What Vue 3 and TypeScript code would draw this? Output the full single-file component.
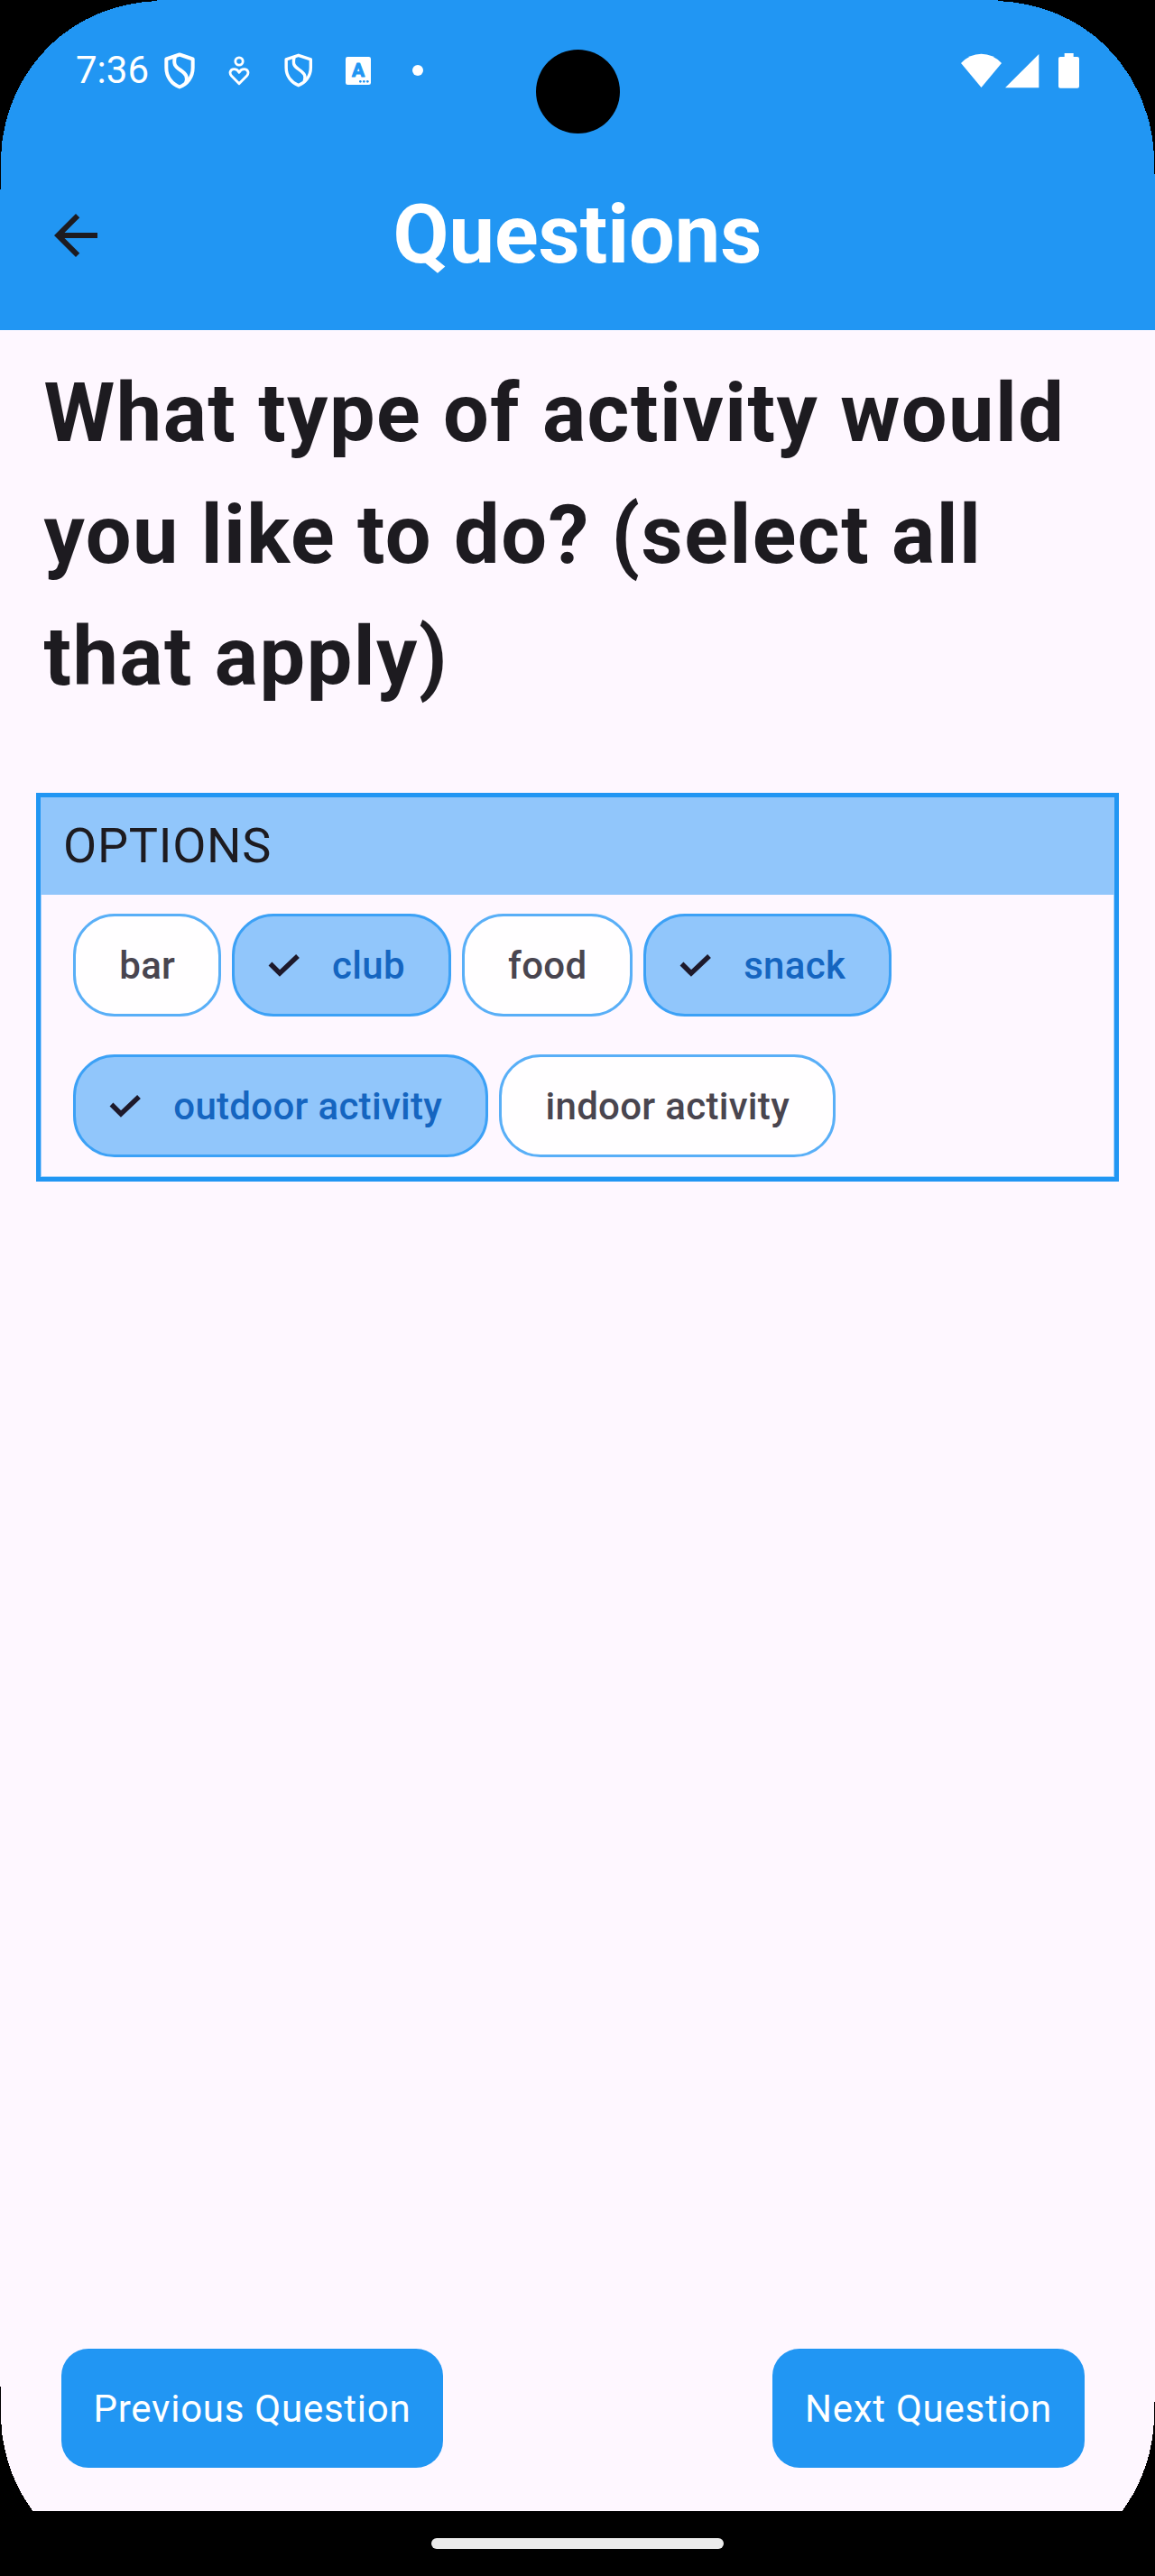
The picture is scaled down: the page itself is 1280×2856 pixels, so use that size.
<script setup lang="ts">
import { ref } from 'vue'

interface Option {
  label: string
  selected: boolean
}

const options = ref<Option[]>([
  { label: 'bar', selected: false },
  { label: 'club', selected: true },
  { label: 'food', selected: false },
  { label: 'snack', selected: true },
  { label: 'outdoor activity', selected: true },
  { label: 'indoor activity', selected: false },
])

function toggle(option: Option): void {
  option.selected = !option.selected
}

const cornerPath = 'M0 0H174V1C128 3 87 20 55.5 50C24 81 3 123 1 174V210H0Z'
const cornerPathShort = 'M0 0H174V1C128 3 87 20 55.5 50C24 81 3 123 1 174V193H0Z'
</script>

<template>
  <div class="screen">
    <header class="top">
      <div class="status">
        <span class="time">7:36</span>
        <svg class="shield" viewBox="66 53 102 122" width="34" height="41">
          <path d="M117 60L73 75V104C73 135 92 158 117 168C142 158 161 135 161 104V75Z" />
          <path d="M102 66C96 92 101 99 119 111C139 125 145 134 138 155" />
        </svg>
        <svg class="heart" viewBox="279 64 72 99" width="24" height="33">
          <circle cx="315" cy="82" r="12.5" />
          <path d="M315 156L290 131C280 120 287 108 298 108C306 108 312 113 315 119C318 113 324 108 332 108C343 108 350 120 340 131Z" />
        </svg>
        <svg class="shield small" viewBox="66 53 102 122" width="31.5" height="38">
          <path d="M117 60L73 75V104C73 135 92 158 117 168C142 158 161 135 161 104V75Z" />
          <path d="M102 66C96 92 101 99 119 111C139 125 145 134 138 155" />
        </svg>
        <svg class="letter" viewBox="669 68 84 93" width="28" height="31">
          <rect x="669" y="68" width="84" height="93" rx="7" fill="#fff" />
          <text x="711.5" y="135.5" text-anchor="middle">A</text>
          <circle cx="718" cy="150" r="4" />
          <circle cx="730" cy="150" r="4" />
          <circle cx="742" cy="150" r="4" />
        </svg>
        <span class="dot"></span>
        <svg class="system" viewBox="75 54 394 117" width="131.33" height="39">
          <path d="M142.500 168L75 87Q104 56 142.500 56Q181 56 210 87Z" />
          <path d="M222 169L334 57V169Z" />
          <path d="M419 54H449V66H462Q468 66 468 72V164Q468 170 462 170H405Q399 170 399 164V72Q399 66 405 66H419Z" />
        </svg>
      </div>
      <div class="appbar">
        <button class="back" aria-label="Back">
          <svg viewBox="4 4 16 16" width="48" height="48">
            <path d="M20 11H7.830l5.590-5.590L12 4l-8 8 8 8 1.410-1.410L7.830 13H20z" />
          </svg>
        </button>
        <h1>Questions</h1>
      </div>
    </header>

    <main>
      <h2>What type of activity would you like to do? (select all that apply)</h2>
      <section class="box">
        <div class="box-title">OPTIONS</div>
        <div class="chips">
          <button
            v-for="option in options"
            :key="option.label"
            class="chip"
            :class="{ selected: option.selected }"
            @click="toggle(option)"
          >
            <svg v-if="option.selected" class="check" viewBox="0 0 36 27" width="36" height="27">
              <path d="M2.500 11.500L13 22L33 3" />
            </svg>
            <span>{{ option.label }}</span>
          </button>
        </div>
      </section>
    </main>

    <footer>
      <button class="nav-button">Previous Question</button>
      <button class="nav-button">Next Question</button>
    </footer>
    <div class="gesture"><span></span></div>

    <span class="camera"></span>
    <svg class="corners" viewBox="0 0 1280 2856" width="1280" height="2856" shape-rendering="crispEdges">
      <path :d="cornerPath" />
      <path :d="cornerPathShort" transform="translate(1280 0) scale(-1 1)" />
      <path :d="cornerPath" transform="translate(0 2856) scale(1 -1)" />
      <path :d="cornerPathShort" transform="translate(1280 2856) scale(-1 -1)" />
    </svg>
  </div>
</template>

<style>
body {
  margin: 0;
  background: #000;
}
</style>

<style scoped>
.screen {
  position: relative;
  display: flex;
  flex-direction: column;
  width: 1280px;
  height: 2856px;
  overflow: hidden;
  background: #fef7ff;
  color: #1d1b20;
  font-family: Roboto, "Liberation Sans", sans-serif;
}

button {
  border: 0;
  padding: 0;
  background: none;
  font: inherit;
  color: inherit;
}

svg {
  display: block;
  flex: none;
}

.top {
  height: 366px;
  background: #2196f3;
  color: #fff;
}

.status {
  display: flex;
  align-items: center;
  box-sizing: border-box;
  height: 156px;
  padding: 0 83.500px 0 84px;
}

.time {
  width: 98px;
  font-size: 42px;
  line-height: 50px;
}

.shield,
.heart {
  fill: none;
  stroke: #fff;
  stroke-width: 12;
  stroke-linejoin: round;
}

.heart {
  margin-left: 37px;
  stroke-width: 8.500;
}

.shield.small {
  margin-left: 38px;
  stroke-width: 11;
}

.letter {
  margin-left: 36.500px;
  fill: #2196f3;
}

.letter text {
  font-size: 63px;
  font-weight: 700;
  stroke: #2196f3;
  stroke-width: 3;
  stroke-linejoin: round;
}

.dot {
  width: 12px;
  height: 12px;
  margin-left: 46px;
  border-radius: 50%;
  background: #fff;
}

.system {
  margin-left: auto;
  fill: #fff;
}

.appbar {
  display: grid;
  grid-template-columns: 168px 1fr 168px;
  align-items: center;
  height: 210px;
}

.back {
  padding-left: 60px;
  fill: #1d1b20;
}

h1 {
  margin: 0;
  font-size: 90px;
  line-height: 114px;
  font-weight: 700;
  text-align: center;
}

main {
  flex: 1;
  padding: 25px 40px 0;
}

h2 {
  margin: 0 0 83px;
  padding: 0 7.500px 0 8.500px;
  font-size: 90px;
  line-height: 135px;
  font-weight: 700;
  letter-spacing: 1.500px;
}

.box {
  box-sizing: border-box;
  height: 431px;
  border: 5px solid #2196f3;
  box-shadow: inset 0 0 0 1px #a3d0fb;
}

.box-title {
  box-sizing: border-box;
  height: 108px;
  padding: 13px 25px;
  background: #91c6fb;
  font-size: 54px;
  line-height: 81px;
  letter-spacing: 0.750px;
}

.chips {
  display: flex;
  flex-wrap: wrap;
  gap: 42px 12px;
  padding: 21px 36px 0;
}

.chip {
  display: flex;
  align-items: center;
  box-sizing: border-box;
  height: 114px;
  padding: 0 47.500px 0 48.250px;
  border: 3px solid #59aff7;
  border-radius: 46px;
  background: #fffeff;
  color: #49454f;
  font-size: 42px;
  line-height: 60px;
  font-weight: 500;
  letter-spacing: 0.300px;
}

.chip span {
  padding-top: 1px;
}

.chip.selected {
  padding-right: 48px;
  padding-left: 37px;
  border-color: #3ca1f6;
  background: #91c6fb;
  color: #1565c0;
}

.check {
  margin-right: 35.250px;
  fill: none;
  stroke: #1d192b;
  stroke-width: 5.500;
}

footer {
  display: flex;
  justify-content: space-between;
  align-items: flex-start;
  height: 180px;
  padding: 0 78px 0 67.500px;
}

.nav-button {
  height: 132px;
  padding: 0 36px;
  border-radius: 30px;
  background: #2196f3;
  color: #fff;
  font-size: 42px;
  letter-spacing: 0.750px;
}

.gesture {
  display: flex;
  justify-content: center;
  height: 42px;
  padding-top: 30px;
  background: #000;
}

.gesture span {
  width: 324px;
  height: 12px;
  border-radius: 6px;
  background: #ebebeb;
}

.camera {
  position: absolute;
  top: 55px;
  left: 593.500px;
  width: 93px;
  height: 93px;
  border-radius: 50%;
  background: #000;
}

.corners {
  position: absolute;
  top: 0;
  left: 0;
  pointer-events: none;
}
</style>
